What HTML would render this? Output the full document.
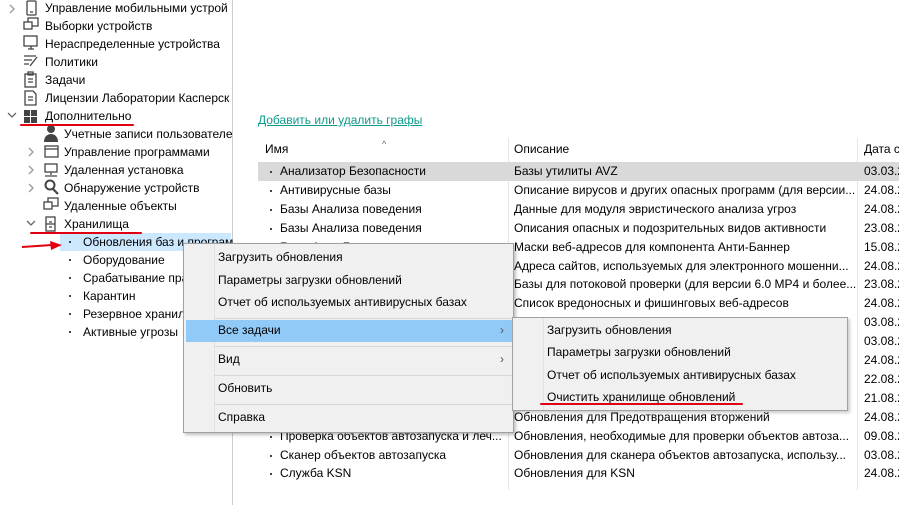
<!DOCTYPE html><html><head><meta charset="utf-8"><style>
*{margin:0;padding:0;box-sizing:border-box}
body{width:899px;height:505px;background:#fff;font-family:"Liberation Sans",sans-serif;font-size:12px;color:#000;position:relative;overflow:hidden}
.a{position:absolute;white-space:nowrap;line-height:18px}
.t{position:absolute;white-space:nowrap;line-height:18px;height:18px}
.ic{position:absolute;width:14px;height:14px}
.chev{position:absolute;color:#888;font-size:11px}
.dot{position:absolute;width:2px;height:2px;background:#444}
.red{position:absolute;height:2px;background:#e00010;border-radius:1px}
</style></head><body>
<div style="position:absolute;left:232px;top:0;width:1px;height:505px;background:#ccc"></div>
<!-- tree -->
<div style="position:absolute;left:60px;top:233px;width:171px;height:18px;background:#cce8ff"></div>
<svg width="232" height="340" style="position:absolute;left:0;top:0" fill="none" stroke="#444" stroke-width="1.3">
<path d="M10 5l4 4-4 4" stroke="#999"/>
<rect x="27" y="1" width="9" height="14" rx="1"/><path d="M30 12h3"/>
<rect x="28" y="18" width="10" height="8"/><rect x="24" y="22" width="8" height="7" fill="#fff"/>
<rect x="24" y="36" width="13" height="10"/><path d="M28 49h6M31 46v3"/>
<path d="M24 56h12M24 60h8M24 64h5M30 66l7-9"/>
<rect x="25" y="74" width="11" height="13"/><path d="M28 72h5v3h-5zM28 79h5M28 82h5"/>
<path d="M25 91h8l3 3v11h-11zM28 97h5M28 100h5"/>
<path d="M8 113l4 4 4-4" stroke="#666"/>
<g fill="#444" stroke="none"><rect x="24" y="110" width="6" height="6"/><rect x="31" y="110" width="6" height="6"/><rect x="24" y="117" width="6" height="6"/><rect x="31" y="117" width="6" height="6"/>
<circle cx="51" cy="129" r="4"/><path d="M44 142c0-6 4-8 7-8s7 2 7 8z"/></g>
<path d="M29 148l4 4-4 4M29 166l4 4-4 4M29 184l4 4-4 4" stroke="#999"/>
<rect x="45" y="146" width="13" height="11"/><path d="M45 149h13"/>
<rect x="45" y="164" width="12" height="8"/><path d="M51 172v3M45 176h12"/>
<circle cx="50" cy="185" r="4.5" stroke-width="2"/><path d="M53 189l5 5" stroke-width="2.2"/>
<rect x="48" y="198" width="10" height="8"/><rect x="44" y="202" width="8" height="7" fill="#fff"/>
<path d="M27 221l4 4 4-4" stroke="#666"/>
<rect x="46" y="217" width="9" height="14"/><path d="M49 222h3M49 227h3M46 224h9"/>
</svg>
<div class="a" style="left:45px;top:-1px">Управление мобильными устрой</div>
<div class="a" style="left:45px;top:17px">Выборки устройств</div>
<div class="a" style="left:45px;top:35px">Нераспределенные устройства</div>
<div class="a" style="left:45px;top:53px">Политики</div>
<div class="a" style="left:45px;top:71px">Задачи</div>
<div class="a" style="left:45px;top:89px">Лицензии Лаборатории Касперск</div>
<div class="a" style="left:45px;top:107px">Дополнительно</div>
<div class="a" style="left:64px;top:125px">Учетные записи пользователе</div>
<div class="a" style="left:64px;top:143px">Управление программами</div>
<div class="a" style="left:64px;top:161px">Удаленная установка</div>
<div class="a" style="left:64px;top:179px">Обнаружение устройств</div>
<div class="a" style="left:64px;top:197px">Удаленные объекты</div>
<div class="a" style="left:64px;top:215px">Хранилища</div>
<div class="a" style="left:83px;top:233px">Обновления баз и програм</div>
<div class="a" style="left:83px;top:251px">Оборудование</div>
<div class="a" style="left:83px;top:269px">Срабатывание пра</div>
<div class="a" style="left:83px;top:287px">Карантин</div>
<div class="a" style="left:83px;top:305px">Резервное хранил</div>
<div class="a" style="left:83px;top:323px">Активные угрозы</div>
<div class="dot" style="left:69px;top:241px"></div><div class="dot" style="left:69px;top:259px"></div><div class="dot" style="left:69px;top:277px"></div><div class="dot" style="left:69px;top:295px"></div><div class="dot" style="left:69px;top:313px"></div><div class="dot" style="left:69px;top:331px"></div>
<div class="red" style="left:20px;top:124px;width:114px"></div>
<div class="red" style="left:30px;top:232px;width:112px"></div>
<svg style="position:absolute;left:20px;top:240px" width="44" height="12"><path d="M2 7L32 5" stroke="#e00010" stroke-width="2"/><path d="M30 1L42 5L31 10z" fill="#e00010"/></svg>
<!-- right -->
<div class="a" style="left:258px;top:111px;color:#0c9a8a;text-decoration:underline">Добавить или удалить графы</div>
<div class="a" style="left:382px;top:135px;font-size:9px;color:#666">^</div>
<div style="position:absolute;left:508px;top:138px;width:1px;height:352px;background:#e5e5e5"></div>
<div style="position:absolute;left:857px;top:138px;width:1px;height:352px;background:#e5e5e5"></div>
<div class="a" style="left:265px;top:140px">Имя</div>
<div class="a" style="left:514px;top:140px">Описание</div>
<div class="a" style="left:864px;top:140px">Дата с</div>
<div style="position:absolute;left:258px;top:162px;width:641px;height:19px;background:#d9d9d9"></div>
<div id="rows"></div>
<script>
var r=[["Анализатор Безопасности","Базы утилиты AVZ","03.03.2"],["Антивирусные базы","Описание вирусов и других опасных программ (для версии...","24.08.2"],["Базы Анализа поведения","Данные для модуля эвристического анализа угроз","24.08.2"],["Базы Анализа поведения","Описания опасных и подозрительных видов активности","23.08.2"],["Базы Анти-Баннера","Маски веб-адресов для компонента Анти-Баннер","15.08.2"],["","Адреса сайтов, используемых для электронного мошенни...","24.08.2"],["","Базы для потоковой проверки (для версии 6.0 MP4 и более...","23.08.2"],["","Список вредоносных и фишинговых веб-адресов","24.08.2"],["","","03.08.2"],["","","03.08.2"],["","","24.08.2"],["","","22.08.2"],["","","21.08.2"],["","Обновления для Предотвращения вторжений","24.08.2"],["Проверка объектов автозапуска и леч...","Обновления, необходимые для проверки объектов автоза...","09.08.2"],["Сканер объектов автозапуска","Обновления для сканера объектов автозапуска, использу...","03.08.2"],["Служба KSN","Обновления для KSN","24.08.2"]];
var h="";r.forEach(function(x,i){var y=162+i*18.9;h+='<div class="dot" style="left:270px;top:'+(y+9)+'px"></div><div class="a" style="left:280px;top:'+y+'px">'+x[0]+'</div><div class="a" style="left:514px;top:'+y+'px">'+x[1]+'</div><div class="a" style="left:864px;top:'+y+'px">'+x[2]+'</div>';});
document.getElementById("rows").innerHTML=h;
</script>
<!-- menu 1 -->
<div style="position:absolute;left:183px;top:243px;width:331px;height:190px;background:#f0f0f0;border:1px solid #a0a0a0;box-shadow:2px 2px 3px rgba(0,0,0,.25)"></div>
<div style="position:absolute;left:214px;top:244px;width:1px;height:188px;background:#e2e2e2"></div>
<div style="position:absolute;left:186px;top:320px;width:327px;height:22px;background:#91c9f7"></div>
<div style="position:absolute;left:214px;top:318px;width:298px;height:1px;background:#d7d7d7"></div>
<div style="position:absolute;left:214px;top:346px;width:298px;height:1px;background:#d7d7d7"></div>
<div style="position:absolute;left:214px;top:375px;width:298px;height:1px;background:#d7d7d7"></div>
<div style="position:absolute;left:214px;top:404px;width:298px;height:1px;background:#d7d7d7"></div>
<div class="a" style="left:218px;top:248px">Загрузить обновления</div>
<div class="a" style="left:218px;top:271px">Параметры загрузки обновлений</div>
<div class="a" style="left:218px;top:293px">Отчет об используемых антивирусных базах</div>
<div class="a" style="left:218px;top:321px">Все задачи</div>
<div class="a" style="left:218px;top:350px">Вид</div>
<div class="a" style="left:218px;top:379px">Обновить</div>
<div class="a" style="left:218px;top:408px">Справка</div>
<div class="a" style="left:500px;top:321px;color:#555">›</div>
<div class="a" style="left:500px;top:350px;color:#555">›</div>
<!-- submenu -->
<div style="position:absolute;left:512px;top:317px;width:336px;height:94px;background:#f0f0f0;border:1px solid #a0a0a0;box-shadow:2px 2px 3px rgba(0,0,0,.2)"></div>
<div style="position:absolute;left:543px;top:318px;width:1px;height:92px;background:#e2e2e2"></div>
<div class="a" style="left:547px;top:321px">Загрузить обновления</div>
<div class="a" style="left:547px;top:343px">Параметры загрузки обновлений</div>
<div class="a" style="left:547px;top:366px">Отчет об используемых антивирусных базах</div>
<div class="a" style="left:547px;top:388px">Очистить хранилище обновлений</div>
<div class="red" style="left:540px;top:403px;width:203px"></div>
</body></html>
